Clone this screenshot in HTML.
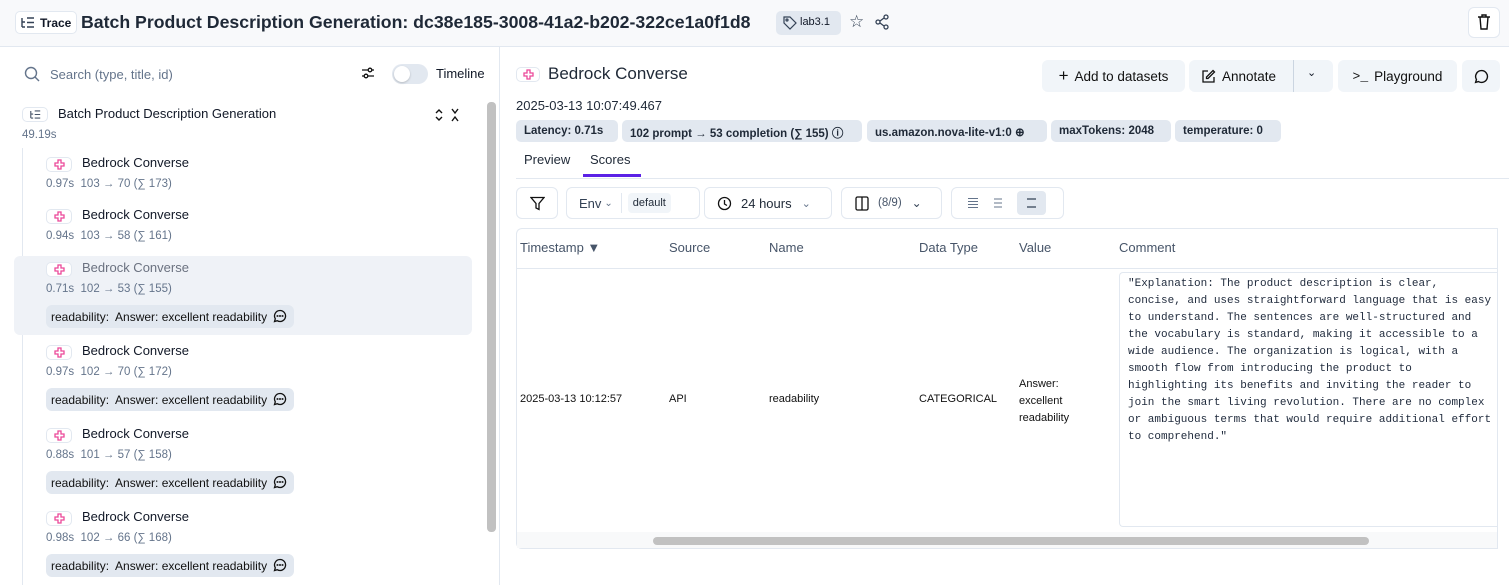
<!DOCTYPE html>
<html><head><meta charset="utf-8"><style>
*{box-sizing:border-box;margin:0;padding:0}
body{width:1509px;height:585px;overflow:hidden;background:#fff;font-family:"Liberation Sans",sans-serif;color:#111827;position:relative}
.a{position:absolute;white-space:nowrap}
.hdr{position:absolute;left:0;top:0;width:1509px;height:47px;background:#f8f9fb;border-bottom:1px solid #e2e8f0}
.tag{display:inline-block;border:1px solid #e2e8f0;border-radius:5px;background:#fff}
.ic{position:absolute;width:26px;height:15px;border:1px solid #e2e8f0;border-radius:5px;background:#fff}
.t{font-size:13px;color:#111827}
.m{font-size:11.5px;color:#64748b}
.badge{position:absolute;height:23px;background:#e2e8f0;border-radius:6px;font-size:12px;color:#111;padding:5px 5px;white-space:nowrap}
.btn{position:absolute;top:60px;height:32px;background:#f1f5f9;border-radius:6px;font-size:13.5px;color:#111;display:flex;align-items:center;justify-content:center;gap:6px}
.chip{position:absolute;top:120px;height:22px;background:#e2e8f0;border-radius:5px;font-size:11.5px;font-weight:bold;color:#1f2937;padding:5px 8px;white-space:nowrap}
.tb{position:absolute;top:187px;height:32px;border:1px solid #e2e8f0;border-radius:6px;background:#fff;font-size:13px;color:#334155;display:flex;align-items:center}
.th{position:absolute;top:240px;font-size:13px;color:#475569}
.td{position:absolute;font-size:11px;color:#111}
</style></head><body>
<div class="hdr"></div>
<div class="a tag" style="left:15px;top:11px;width:62px;height:23px;font-size:12px;font-weight:bold;padding:4px 0 0 24px;">Trace</div>
<svg class="a" style="left:21px;top:17px" width="14" height="11" viewBox="0 0 14 11" fill="none" stroke="#334155" stroke-width="1.4"><path d="M1 1v9M1 5h3M1 10h3M6 1h7M6 5.5h7M6 10h7"/></svg>
<div class="a" style="left:81px;top:12px;font-size:17.7px;font-weight:bold;color:#1f2937">Batch Product Description Generation: dc38e185-3008-41a2-b202-322ce1a0f1d8</div>
<div class="a" style="left:776px;top:11px;width:65px;height:24px;background:#e2e8f0;border-radius:5px;font-size:11px;padding:5px 0 0 24px">lab3.1</div>
<svg class="a" style="left:783px;top:16px" width="14" height="14" viewBox="0 0 14 14" fill="none" stroke="#334155" stroke-width="1.2"><path d="M1 1h6l6 6-6 6-6-6z"/><circle cx="4" cy="4" r="1"/></svg>
<div class="a" style="left:849px;top:12px;font-size:17px;color:#334155">☆</div>
<svg class="a" style="left:874px;top:14px" width="16" height="16" viewBox="0 0 16 16" fill="none" stroke="#334155" stroke-width="1.3"><circle cx="12" cy="3" r="2"/><circle cx="4" cy="8" r="2"/><circle cx="12" cy="13" r="2"/><path d="M6 7l4-3M6 9l4 3"/></svg>
<div class="a" style="left:1468px;top:7px;width:32px;height:31px;border:1px solid #e2e8f0;border-radius:6px;background:#fff"></div>
<svg class="a" style="left:1477px;top:14px" width="14" height="16" viewBox="0 0 14 16" fill="none" stroke="#111" stroke-width="1.4"><path d="M1 3h12M5 3V1h4v2M3 3l1 12h6l1-12"/></svg>

<div class="a" style="left:499px;top:47px;width:1px;height:538px;background:#e2e8f0"></div>
<svg class="a" style="left:24px;top:66px" width="16" height="16" viewBox="0 0 16 16" fill="none" stroke="#64748b" stroke-width="1.4"><circle cx="7" cy="7" r="5.5"/><path d="M11 11l4 4"/></svg>
<div class="a" style="left:50px;top:67px;font-size:13px;color:#64748b">Search (type, title, id)</div>
<svg class="a" style="left:361px;top:66px" width="14" height="14" viewBox="0 0 14 14" fill="none" stroke="#111" stroke-width="1.3"><path d="M1 4h6M11 4h2M1 10h2M7 10h6"/><circle cx="9" cy="4" r="1.8"/><circle cx="5" cy="10" r="1.8"/></svg>
<div class="a" style="left:392px;top:64px;width:36px;height:20px;background:#e2e8f0;border-radius:10px"></div>
<div class="a" style="left:394px;top:66px;width:16px;height:16px;background:#fff;border-radius:8px;box-shadow:0 1px 2px rgba(0,0,0,.2)"></div>
<div class="a" style="left:436px;top:66px;font-size:13px">Timeline</div>
<div class="a" style="left:487px;top:102px;width:9px;height:430px;background:#c1c1c1;border-radius:4px"></div>

<div class="ic" style="left:22px;top:107px"></div>
<svg class="a" style="left:30px;top:110px" width="11" height="9" viewBox="0 0 14 11" fill="none" stroke="#475569" stroke-width="1.4"><path d="M1 1v9M1 5h3M1 10h3M6 1h7M6 5.5h7M6 10h7"/></svg>
<div class="a" style="left:58px;top:106px;font-size:13px">Batch Product Description Generation</div>
<svg class="a" style="left:434px;top:108px" width="30" height="14" viewBox="0 0 30 14" fill="none" stroke="#111" stroke-width="1.4"><path d="M2 5l3-3 3 3M2 9l3 3 3-3M18 1l3 4 3-4M18 13l3-4 3 4"/></svg>
<div class="a m" style="left:22px;top:129px">49.19s</div>
<div class="a" style="left:22px;top:148px;width:1px;height:437px;background:#e2e8f0"></div>
<div class="a" style="left:14px;top:256px;width:458px;height:79px;background:#eff2f7;border-radius:6px"></div>

<div id="items"></div>
<script>
var it=[[155,"0.97s","103 → 70 (∑ 173)",0,0],[207,"0.94s","103 → 58 (∑ 161)",0,0],[260,"0.71s","102 → 53 (∑ 155)",1,1],[343,"0.97s","102 → 70 (∑ 172)",1,0],[426,"0.88s","101 → 57 (∑ 158)",1,0],[509,"0.98s","102 → 66 (∑ 168)",1,0]];
var h="";
it.forEach(function(r){var y=r[0];
h+='<div class="ic" style="left:46px;top:'+(y+2)+'px"></div><svg class="a" style="left:54px;top:'+(y+4)+'px" width="11" height="11" viewBox="0 0 11 11" fill="none" stroke="#ec4899" stroke-width="1.3"><path d="M4 1h3v3h3v3H7v3H4V7H1V4h3z"/></svg>';
h+='<div class="a t" style="left:82px;top:'+y+'px;color:'+(r[4]?'#6b7280':'#111827')+'">Bedrock Converse</div>';
h+='<div class="a m" style="left:46px;top:'+(y+23)+'px">'+r[1]+'&nbsp;&nbsp;'+r[2]+'</div>';
if(r[3])h+='<div class="badge" style="left:46px;top:'+(y+45)+'px;width:248px">readability:&nbsp; Answer: excellent readability</div><svg class="a" style="left:273px;top:'+(y+49)+'px" width="14" height="14" viewBox="0 0 14 14" fill="none" stroke="#111" stroke-width="1.3"><path d="M7 1.5a5.5 5.5 0 1 1-2.8 10.2L1.5 12.5l.8-2.7A5.5 5.5 0 0 1 7 1.5z"/><circle cx="4.5" cy="7" r=".4"/><circle cx="7" cy="7" r=".4"/><circle cx="9.5" cy="7" r=".4"/></svg>';
});
document.getElementById("items").innerHTML=h;
</script>

<div class="ic" style="left:516px;top:67px;width:24px;height:15px"></div>
<svg class="a" style="left:523px;top:69px" width="11" height="11" viewBox="0 0 11 11" fill="none" stroke="#ec4899" stroke-width="1.3"><path d="M4 1h3v3h3v3H7v3H4V7H1V4h3z"/></svg>
<div class="a" style="left:548px;top:64px;font-size:17px;color:#1f2937">Bedrock Converse</div>
<div class="btn" style="left:1042px;width:143px"><span style="font-size:17px">+</span>Add to datasets</div>
<div class="btn" style="left:1189px;width:144px;justify-content:flex-start;padding-left:12px">
<svg width="15" height="15" viewBox="0 0 15 15" fill="none" stroke="#111" stroke-width="1.3"><path d="M7 2H2v11h11V8M12 1.5l1.5 1.5L7 9.5H5.5V8z"/></svg>Annotate</div>
<div class="a" style="left:1293px;top:60px;width:1px;height:32px;background:#cbd5e1"></div>
<div class="a" style="left:1307px;top:66px;font-size:11px">⌄</div>
<div class="btn" style="left:1338px;width:119px"><span style="font-family:'Liberation Mono';font-size:13px">&gt;_</span> Playground</div>
<div class="btn" style="left:1462px;width:38px"><svg width="15" height="15" viewBox="0 0 14 14" fill="none" stroke="#111" stroke-width="1.3"><path d="M7 1.5a5.5 5.5 0 1 1-2.8 10.2L1.5 12.5l.8-2.7A5.5 5.5 0 0 1 7 1.5z"/></svg></div>
<div class="a" style="left:516px;top:98px;font-size:13px;color:#1f2937">2025-03-13 10:07:49.467</div>
<div class="chip" style="left:516px;width:102px">Latency: 0.71s</div>
<div class="chip" style="left:622px;width:240px">102 prompt → 53 completion (∑ 155) ⓘ</div>
<div class="chip" style="left:867px;width:180px">us.amazon.nova-lite-v1:0 ⊕</div>
<div class="chip" style="left:1051px;width:120px">maxTokens: 2048</div>
<div class="chip" style="left:1175px;width:106px">temperature: 0</div>
<div class="a" style="left:524px;top:152px;font-size:13px;color:#1f2937">Preview</div>
<div class="a" style="left:590px;top:152px;font-size:13px;color:#1f2937">Scores</div>
<div class="a" style="left:516px;top:178px;width:993px;height:1px;background:#e2e8f0"></div>
<div class="a" style="left:583px;top:174px;width:58px;height:3px;background:#5b21e6"></div>

<div class="tb" style="left:516px;width:42px;justify-content:center"><svg width="15" height="15" viewBox="0 0 15 15" fill="none" stroke="#111" stroke-width="1.3"><path d="M1 1.5h13L9 7.5v6l-3-1.5V7.5z"/></svg></div>
<div class="tb" style="left:566px;width:134px;padding-left:12px">Env<span style="font-size:10px;color:#64748b;margin-left:3px">⌄</span><div style="width:1px;height:20px;background:#e2e8f0;margin-left:8px"></div><div style="margin-left:6px;background:#f1f5f9;border-radius:4px;font-size:11px;padding:4px 5px;color:#1f2937">default</div></div>
<div class="tb" style="left:704px;width:128px;padding-left:12px"><svg width="15" height="15" viewBox="0 0 15 15" fill="none" stroke="#111" stroke-width="1.3"><circle cx="7.5" cy="7.5" r="6"/><path d="M7.5 4v4l2.5 1.5"/></svg><span style="margin-left:9px;color:#1f2937">24 hours</span><span style="margin-left:10px;color:#64748b;font-size:11px">⌄</span></div>
<div class="tb" style="left:841px;width:101px;padding-left:13px"><svg width="14" height="15" viewBox="0 0 14 15" fill="none" stroke="#111" stroke-width="1.3"><rect x="1" y="1" width="12" height="13" rx="1.5"/><path d="M7 1v13"/></svg><span style="margin-left:9px;font-size:11.5px;color:#475569">(8/9)</span><span style="margin-left:10px;font-size:12px">⌄</span></div>
<div class="tb" style="left:951px;width:113px;padding-left:15px;gap:13px">
<svg width="12" height="12" viewBox="0 0 12 12" stroke="#64748b" stroke-width="1.1"><path d="M1 1.5h10M1 4.5h10M1 7.5h10M1 10.5h10"/></svg>
<svg width="12" height="12" viewBox="0 0 12 12" stroke="#64748b" stroke-width="1.1"><path d="M2 2h8M2 6h8M2 10h8"/></svg>
<div style="width:29px;height:24px;background:#e2e8f0;border-radius:4px;display:flex;align-items:center;justify-content:center"><svg width="13" height="12" viewBox="0 0 13 12" stroke="#334155" stroke-width="1.3"><path d="M2 2h9M2 10h9"/></svg></div></div>

<div class="a" style="left:516px;top:228px;width:993px;height:321px;border:1px solid #e2e8f0;border-radius:6px;border-right:none"></div>
<div class="a" style="left:517px;top:268px;width:980px;height:1px;background:#e2e8f0"></div>
<div class="th" style="left:520px">Timestamp ▼</div>
<div class="th" style="left:669px">Source</div>
<div class="th" style="left:769px">Name</div>
<div class="th" style="left:919px">Data Type</div>
<div class="th" style="left:1019px">Value</div>
<div class="th" style="left:1119px">Comment</div>
<div class="td" style="left:520px;top:393px">2025-03-13 10:12:57</div>
<div class="td" style="left:669px;top:393px">API</div>
<div class="td" style="left:769px;top:393px">readability</div>
<div class="td" style="left:919px;top:393px">CATEGORICAL</div>
<div class="td" style="left:1019px;top:376px;line-height:17px">Answer:<br>excellent<br>readability</div>
<div class="a" style="left:1119px;top:272px;width:390px;height:255px;border:1px solid #e2e8f0;border-radius:4px;border-right:none;overflow:hidden">
<div style="position:absolute;left:8px;top:3px;font-family:'Liberation Mono',monospace;font-size:11px;line-height:17px;color:#1e293b;white-space:pre">"Explanation: The product description is clear,
concise, and uses straightforward language that is easy
to understand. The sentences are well-structured and
the vocabulary is standard, making it accessible to a
wide audience. The organization is logical, with a
smooth flow from introducing the product to
highlighting its benefits and inviting the reader to
join the smart living revolution. There are no complex
or ambiguous terms that would require additional effort
to comprehend."</div></div>
<div class="a" style="left:1497px;top:228px;width:12px;height:321px;background:#fff"></div>
<div class="a" style="left:1497px;top:228px;width:1px;height:321px;background:#e2e8f0"></div>
<div class="a" style="left:517px;top:532px;width:980px;height:16px;background:#f8f9fa"></div>
<div class="a" style="left:653px;top:537px;width:716px;height:8px;background:#c1c1c1;border-radius:4px"></div>
</body></html>
